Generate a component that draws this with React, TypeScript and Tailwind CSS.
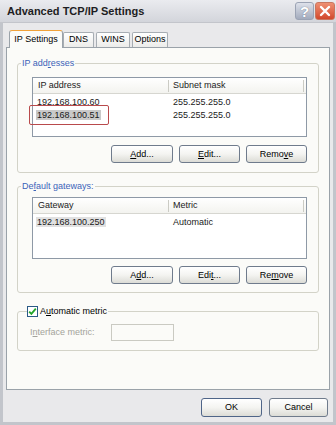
import React from "react";

const Btn = ({ children, w }: { children: React.ReactNode; w: string }) => (
  <button
    className={`h-[18px] ${w} rounded-[3px] border border-[#6f7b8c] bg-linear-to-b from-white via-[#f4f4f1] to-[#dcdcd6] text-[9px] leading-none text-black`}
  >
    {children}
  </button>
);

type Row = { a: string; b: string; hl?: string };

const ListView = ({
  cols,
  rows,
  h,
  children,
}: {
  cols: [string, string];
  rows: Row[];
  h: string;
  children?: React.ReactNode;
}) => (
  <div className={`relative ${h} border border-[#8e99a6] bg-white`}>
    {/* header */}
    <div className="flex h-[16px] items-center border-b border-[#d6d6d0] bg-linear-to-b from-white to-[#f3f3ef] text-[9px] text-[#222]">
      <div className="flex w-[136px] items-center justify-between pl-[5px]">
        <span>{cols[0]}</span>
        <span className="h-[12px] w-px bg-[#cbcbc4]" />
      </div>
      <div className="flex flex-1 items-center justify-between pl-[4px] pr-[2px]">
        <span>{cols[1]}</span>
        <span className="h-[12px] w-px bg-[#cbcbc4]" />
      </div>
    </div>
    <div className="pt-[2px]">
      {rows.map((r) => (
        <div key={r.a} className="flex h-[13px] items-center text-[9px] text-[#1a1a1a]">
          <div className="w-[136px] pl-[3px]">
            <span className={`px-[1px] ${r.hl ?? ""}`}>{r.a}</span>
          </div>
          <div className="pl-[4px]">{r.b}</div>
        </div>
      ))}
    </div>
    {children}
  </div>
);

const U = ({ c }: { c: string }) => <span className="underline">{c}</span>;

export default function App() {
  return (
    <div className="flex h-[425px] w-[336px] flex-col bg-[#e9e9eb] font-['Liberation_Sans',sans-serif]">
      {/* title bar */}
      <div className="flex h-[23px] shrink-0 items-center justify-between border-b border-[#c3c5cb] bg-linear-to-b from-[#eaebef] to-[#d3d5db] pl-[7px] pr-[1px]">
        <span className="text-[11px] font-bold text-[#1d1d22]">Advanced TCP/IP Settings</span>
        <div className="flex items-center gap-[1px]">
          <div className="flex h-[18px] w-[19px] items-center justify-center rounded-[3px] border border-[#9ba3b4] bg-linear-to-b from-[#dde1ea] to-[#a3abbd]">
            <span className="text-[15px] font-bold leading-none text-white [text-shadow:0_0_1px_#59627a]">?</span>
          </div>
          <div className="flex h-[18px] w-[20px] items-center justify-center rounded-[3px] border border-[#c9765f] bg-linear-to-b from-[#ee8f72] to-[#d2472b]">
            <svg width="12" height="12" viewBox="0 0 12 12">
              <path d="M2 2 L10 10 M10 2 L2 10" stroke="white" strokeWidth="2.4" strokeLinecap="round" />
            </svg>
          </div>
        </div>
      </div>

      {/* body */}
      <div className="flex flex-1 flex-col border-x-[3px] border-b-[3px] border-[#c2c5cb] px-[3px]">
        {/* tabs */}
        <div className="relative z-10 mt-[7px] flex h-[17px] items-end pl-[3px] text-[9px] text-black">
          <div className="-mb-px flex h-[18px] w-[54px] items-center justify-center rounded-t-[3px] border border-b-0 border-[#9aa2a9] border-t-[#f1a23a] bg-[#fbfbf8]">
            IP Settings
          </div>
          <div className="flex h-[15px] w-[31px] items-center justify-center rounded-t-[2px] border border-b-0 border-[#a7adb3] bg-linear-to-b from-white to-[#ececea]">
            DNS
          </div>
          <div className="ml-[2px] flex h-[15px] w-[34px] items-center justify-center rounded-t-[2px] border border-b-0 border-[#a7adb3] bg-linear-to-b from-white to-[#ececea]">
            WINS
          </div>
          <div className="ml-[2px] flex h-[15px] w-[36px] items-center justify-center rounded-t-[2px] border border-b-0 border-[#a7adb3] bg-linear-to-b from-white to-[#ececea]">
            Options
          </div>
        </div>

        {/* panel */}
        <div className="h-[343px] border border-[#9aa2a9] bg-[#fbfbf8] px-[10px]">
          {/* IP addresses */}
          <fieldset className="mt-[10px] rounded-[3px] border border-[#d3d3c8] pb-[9px] pl-[3px] pr-[11px]">
            <legend className="px-[1px] text-[9px] leading-[11px] text-[#3c63b8]">
              IP add<U c="r" />esses
            </legend>
            <div className="ml-[11px]">
              <div className="mt-[8px]">
                <ListView
                  h="h-[60px]"
                  cols={["IP address", "Subnet mask"]}
                  rows={[
                    { a: "192.168.100.60", b: "255.255.255.0" },
                    { a: "192.168.100.51", b: "255.255.255.0", hl: "bg-[#c9c9c9]" },
                  ]}
                >
                  <div className="absolute left-[-4px] top-[27px] h-[20px] w-[80px] rounded-[2px] border border-[#b94a4c]" />
                </ListView>
              </div>
              <div className="mt-[8px] flex justify-end gap-[6px]">
                <Btn w="w-[62px]"><U c="A" />dd...</Btn>
                <Btn w="w-[61px]"><U c="E" />dit...</Btn>
                <Btn w="w-[61px]">Remo<U c="v" />e</Btn>
              </div>
            </div>
          </fieldset>

          {/* Default gateways */}
          <fieldset className="mt-[8px] rounded-[3px] border border-[#d3d3c8] pb-[8px] pl-[3px] pr-[11px]">
            <legend className="px-[1px] text-[9px] leading-[11px] text-[#3c63b8]">
              De<U c="f" />ault gateways:
            </legend>
            <div className="ml-[11px]">
              <div className="mt-[5px]">
                <ListView
                  h="h-[62px]"
                  cols={["Gateway", "Metric"]}
                  rows={[{ a: "192.168.100.250", b: "Automatic", hl: "bg-[#e1e1e1]" }]}
                />
              </div>
              <div className="mt-[7px] flex justify-end gap-[6px]">
                <Btn w="w-[62px]">A<U c="d" />d...</Btn>
                <Btn w="w-[61px]">Edi<U c="t" />...</Btn>
                <Btn w="w-[61px]">Re<U c="m" />ove</Btn>
              </div>
            </div>
          </fieldset>

          {/* Automatic metric */}
          <fieldset className="mt-[13px] rounded-[3px] border border-[#d3d3c8] pb-[9px] pl-[9px]">
            <legend className="flex items-center text-[9px] leading-[11px] text-black">
              <span className="flex h-[11px] w-[11px] items-center justify-center border border-[#2a5a86] bg-white">
                <svg width="9" height="9" viewBox="0 0 9 9">
                  <path d="M1.2 4.6 L3.4 6.9 L7.8 1.6" fill="none" stroke="#22a52a" strokeWidth="1.8" />
                </svg>
              </span>
              <span className="pl-[2px] pr-[1px]">
                A<U c="u" />tomatic metric
              </span>
            </legend>
            <div className="mt-[7px] flex items-center pl-[3px]">
              <span className="w-[81px] text-[9px] text-[#a3a39b]">
                I<U c="n" />terface metric:
              </span>
              <div className="h-[17px] w-[63px] border border-[#cacac2]" />
            </div>
          </fieldset>
        </div>

        {/* dialog buttons */}
        <div className="mr-[2px] mt-[8px] flex justify-end gap-[7px]">
          <button className="h-[19px] w-[61px] rounded-[3px] border border-[#4f6588] bg-linear-to-b from-white via-[#f4f4f1] to-[#dcdcd6] text-[9px] text-black">
            OK
          </button>
          <button className="h-[19px] w-[59px] rounded-[3px] border border-[#6f7b8c] bg-linear-to-b from-white via-[#f4f4f1] to-[#dcdcd6] text-[9px] text-black">
            Cancel
          </button>
        </div>
      </div>
    </div>
  );
}
